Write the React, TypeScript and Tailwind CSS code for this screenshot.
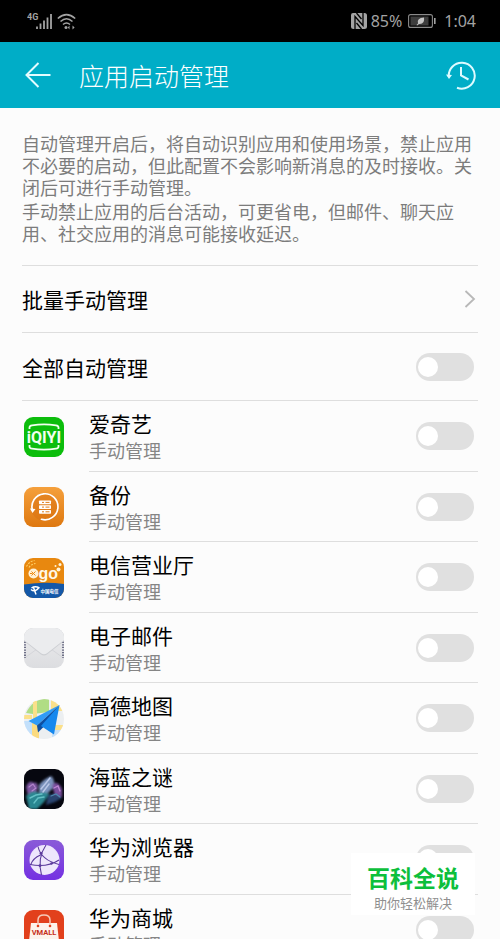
import type { ReactNode } from "react";

interface AppItem { id: string; name: string; icon: ReactNode; }

const svgProps = { viewBox: "0 0 40 40", className: "block h-10 w-10 rounded-[9px]", "aria-hidden": true };

function IqiyiIcon() {
  return (
    <svg {...svgProps}>
      <rect width="40" height="40" fill="#0cbd0c" />
      <path d="M5.500 12V10.500Q5.500 8.600 8 8.300Q20 6.600 32 8.300Q34.500 8.600 34.500 10.500V12" fill="none" stroke="#f2fff0" strokeWidth="1.800" />
      <path d="M5.500 28V29.500Q5.500 31.400 8 31.700Q20 33.400 32 31.700Q34.500 31.400 34.500 29.500V28" fill="none" stroke="#f2fff0" strokeWidth="1.800" />
      <text x="20" y="26" textAnchor="middle" fontFamily="'Liberation Sans Narrow', Roboto, sans-serif" fontWeight="700" fontSize="16" fill="#f2fff0">iQIYI</text>
    </svg>
  );
}

function BackupIcon() {
  return (
    <svg {...svgProps}>
      <defs>
        <linearGradient id="backup" x1="0" y1="0" x2="0" y2="1">
          <stop offset="0" stopColor="#f5a03c" />
          <stop offset="1" stopColor="#de7810" />
        </linearGradient>
      </defs>
      <rect width="40" height="40" fill="url(#backup)" />
      <circle cx="21" cy="20" r="14" fill="#d9720f" opacity=".5" />
      <path d="M8.500 23.500A13 13 0 1 1 17.500 32.300" fill="none" stroke="#fff" strokeWidth="1.700" strokeLinecap="round" />
      <path d="M6 21.500L8.500 26L11.500 22Z" fill="#fff" />
      {[13.5, 18.2, 22.9].map((y) => (
        <g key={y}>
          <rect x="15" y={y} width="12" height="3.800" rx=".7" fill="#fff" />
          <rect x="18" y={y + 1.4} width="2" height="1" fill="#e07f1b" />
          <rect x="21.500" y={y + 1.4} width="4" height="1" fill="#e07f1b" />
        </g>
      ))}
    </svg>
  );
}

function TelecomIcon() {
  return (
    <svg {...svgProps}>
      <rect width="40" height="40" fill="#e8880f" />
      <path d="M0 26.500Q20 23.500 40 26V40H0Z" fill="#1458a8" />
      <path d="M2.500 8.500Q5 3.500 10.500 2.500M5 9.500Q7 6 11.500 5.500" fill="none" stroke="#ffd36b" strokeWidth="1.100" strokeDasharray="2 1.200" />
      <circle cx="9.500" cy="15.500" r="5" fill="#fff1d6" />
      <path d="M7.500 13.500L11.500 17.500M11.500 13.500L7.500 17.500M6 15.500H8.500" stroke="#ee8a12" strokeWidth="1" />
      <text x="14.500" y="20.500" fontFamily="'Liberation Sans', sans-serif" fontWeight="700" fontSize="16" fill="#fff8e8">go</text>
      <circle cx="34.500" cy="11.500" r="2" fill="#fff4d8" />
      <circle cx="36" cy="6.500" r="1.500" fill="#fff4d8" />
      <circle cx="31.500" cy="8" r="1" fill="#fff4d8" />
      <path d="M7 31.500Q11 35 15 29.500M7.500 30Q11 27.500 15.500 30M9.500 29.500L12 36.500" fill="none" stroke="#fff" strokeWidth="1.500" />
      <text x="16.500" y="34.500" fontFamily="'Noto Sans CJK SC', sans-serif" fontWeight="700" fontSize="4.500" fill="#fff">中国电信</text>
    </svg>
  );
}

function MailIcon() {
  return (
    <svg {...svgProps}>
      <defs>
        <linearGradient id="mail" x1="0" y1="0" x2="0" y2="1">
          <stop offset="0" stopColor="#ececee" />
          <stop offset="1" stopColor="#dcdde0" />
        </linearGradient>
      </defs>
      <rect width="40" height="40" fill="url(#mail)" />
      <path d="M2 29L13 21M38 29L27 21" stroke="#cfd0d4" strokeWidth=".7" />
      <path d="M1 11V30M39 11V30" stroke="#6d6f86" strokeWidth="2" strokeDasharray="1.300 1.300" />
      <path d="M0 13L17 26.500Q20 28.500 23 26.500L40 13V0H0Z" fill="#cdcfd3" />
      <path d="M0 12L17 25.300Q20 27.300 23 25.300L40 12V0H0Z" fill="#ebecee" />
    </svg>
  );
}

function MapIcon() {
  return (
    <svg {...svgProps}>
      <defs><clipPath id="map"><circle cx="20" cy="20" r="20" /></clipPath></defs>
      <g clipPath="url(#map)">
        <rect width="40" height="40" fill="#eceff1" />
        <path d="M2 14Q9 0 21 0H25V13L9 15Z" fill="#b0dd84" />
        <path d="M27 0H40V12H27Z" fill="#fbe08a" />
        <path d="M9 2H13V22H9Z" fill="#fbe08a" />
        <path d="M0 22H8V40H0Z" fill="#c3e0fb" />
        <path d="M8 22H15V40H8Z" fill="#fbdb80" />
        <path d="M28 26H40V31H28Z" fill="#fbe08a" />
        <path d="M28 31H40L28 40Z" fill="#c6e0f9" />
        <path d="M0 16H8V20H0Z" fill="#fbe08a" />
      </g>
      <path d="M35.500 6L4.500 22L13 26.500Z" fill="#2f9bf7" />
      <path d="M35.500 6L13 26.500L14 33.500L19 28.500Z" fill="#0c4fa3" />
      <path d="M35.500 6L17 27L30 35.500Z" fill="#1688ee" />
    </svg>
  );
}

function OceanIcon() {
  return (
    <svg {...svgProps}>
      <defs>
        <filter id="foam" x="-20%" y="-20%" width="140%" height="140%"><feGaussianBlur stdDeviation="1.300" /></filter>
        <filter id="spray"><feGaussianBlur stdDeviation=".5" /></filter>
      </defs>
      <rect width="40" height="40" fill="#06070f" />
      <g filter="url(#foam)">
        <path d="M2 18Q5 10 10 14Q13 12 14 18L12 26L4 27Z" fill="#7d56a0" />
        <path d="M15 16Q20 10 27 7Q31 10 30 18L22 26L15 27Z" fill="#7b93bd" />
        <path d="M28 16Q33 10 38 20L38 28L31 27Z" fill="#7a4f9e" />
        <path d="M2 27Q9 20 15 24Q22 22 25 25L20 33L13 40H5Z" fill="#2c8791" />
        <path d="M24 26Q32 23 38 29L31 33L22 36Z" fill="#2b4470" />
      </g>
      <g filter="url(#spray)" fill="none" strokeLinecap="round">
        <path d="M17 20L22 14L26 9M19 23L25 15" stroke="#b9c6e6" strokeWidth="1.500" />
        <path d="M5 18L9 15L11 18M8 22L12 19" stroke="#b384cc" strokeWidth="1.200" />
        <path d="M6 29L12 26L18 25M10 34L14 29L20 28" stroke="#63bfc4" strokeWidth="1.400" />
        <path d="M30 19L34 17L36 22" stroke="#bd86d2" strokeWidth="1.300" />
        <path d="M27 27L32 25L36 28" stroke="#4d86ae" strokeWidth="1.200" />
      </g>
    </svg>
  );
}

function BrowserIcon() {
  return (
    <svg {...svgProps}>
      <defs>
        <linearGradient id="browser" x1="0" y1="0" x2="0" y2="1">
          <stop offset="0" stopColor="#8a5bd8" />
          <stop offset="1" stopColor="#7430e2" />
        </linearGradient>
      </defs>
      <rect width="40" height="40" fill="url(#browser)" />
      <circle cx="20.500" cy="20" r="15" fill="#eee6fc" />
      <path d="M14 6.500Q17 20 35 24.500M22 5Q13 18 17.500 35M6 24.500Q23 28 35 20M16.500 15Q9 18 6.500 25" fill="none" stroke="#5b3a9c" strokeWidth="1.100" />
      <circle cx="17" cy="13.500" r="1.400" fill="#5b3a9c" />
      <circle cx="16" cy="25.700" r="1.400" fill="#5b3a9c" />
      <circle cx="27.500" cy="23.500" r="1.200" fill="#5b3a9c" />
    </svg>
  );
}

function VmallIcon() {
  return (
    <svg {...svgProps}>
      <rect width="40" height="40" fill="#e2401c" />
      <path d="M7 13H33L36 40H4Z" fill="#fdf3ec" />
      <path d="M14 16V10Q14 5 20 5Q26 5 26 10V16" fill="none" stroke="#f6c9b8" strokeWidth="1.500" />
      <circle cx="14" cy="16" r="1.300" fill="#e2401c" />
      <circle cx="26" cy="16" r="1.300" fill="#e2401c" />
      <text x="20" y="25" textAnchor="middle" fontFamily="Roboto, sans-serif" fontWeight="700" fontSize="7.500" fill="#c62f1a">VMALL</text>
    </svg>
  );
}

const apps: AppItem[] = [
  { id: "iqiyi", name: "爱奇艺", icon: <IqiyiIcon /> },
  { id: "backup", name: "备份", icon: <BackupIcon /> },
  { id: "telecom", name: "电信营业厅", icon: <TelecomIcon /> },
  { id: "mail", name: "电子邮件", icon: <MailIcon /> },
  { id: "map", name: "高德地图", icon: <MapIcon /> },
  { id: "ocean", name: "海蓝之谜", icon: <OceanIcon /> },
  { id: "browser", name: "华为浏览器", icon: <BrowserIcon /> },
  { id: "vmall", name: "华为商城", icon: <VmallIcon /> },
];

function Toggle({ id }: { id: string }) {
  return (
    <input
      id={id}
      type="checkbox"
      role="switch"
      className="mr-1 flex h-7 w-[58px] shrink-0 appearance-none items-center rounded-full bg-[#e0e0e0] px-0.5 before:h-5 before:w-5 before:rounded-full before:bg-white checked:justify-end checked:bg-[#00adc7]"
    />
  );
}

function StatusBar() {
  return (
    <div className="flex h-[42px] shrink-0 items-center justify-between bg-black pl-[27px] pr-6 font-['Noto_Sans'] text-base text-[#a3a3a3]">
      <div className="flex items-center gap-1">
        <svg width="26" height="18" viewBox="0 0 26 18" aria-hidden>
          <text x="0" y="8" fontFamily="'Liberation Sans Narrow', Roboto, sans-serif" fontWeight="700" fontSize="9" fill="#a3a3a3">4G</text>
          <path d="M10 17V14.500M13.500 17V11.500M17 17V8.500M20.500 17V5.500M24 17V2" stroke="#a3a3a3" strokeWidth="1.800" />
        </svg>
        <svg width="19" height="18" viewBox="0 0 19 18" fill="none" stroke="#a3a3a3" strokeWidth="1.600" aria-hidden>
          <path d="M.8 6.500Q9.500-1.200 18.200 6.500M3.500 9.500Q9.500 4 15.500 9.500M6 12.500Q9.500 9.500 13 12.500" />
          <circle cx="9" cy="15.500" r="1.500" fill="#a3a3a3" stroke="none" />
          <path d="M12.500 13.500V17.500L10.800 15.500ZM15.500 13.500V17.500L17.600 15.500Z" fill="#a3a3a3" stroke="none" />
        </svg>
      </div>
      <div className="flex items-center gap-1">
        <svg width="16" height="16" viewBox="0 0 16 16" aria-hidden>
          <path d="M2 0H13.500Q16 0 16 2.500V14Q16 16 13.500 16H2.500Q0 16 0 13.500V2Q0 0 2 0Z" fill="#a3a3a3" />
          <path d="M4 16V3.500L12 12.500V0M5.500 0L10.500 6M5.500 10L10.500 16" fill="none" stroke="#000" strokeWidth="1.300" />
        </svg>
        <span>85%</span>
        <svg width="28" height="14" viewBox="0 0 28 14" className="ml-0.5 mr-1" aria-hidden>
          <rect x=".6" y=".6" width="23.800" height="12.800" rx="2" fill="none" stroke="#8a8a8a" strokeWidth="1.100" />
          <rect x="2.500" y="2.500" width="18" height="9" fill="#3d3d3d" />
          <path d="M26.800 4V10" stroke="#a3a3a3" strokeWidth="1.600" />
          <path d="M8.500 11L10 9.500Q8.500 4 16 3.500Q17 10.500 11 10L9.200 11.500Z" fill="#c4c4c4" />
        </svg>
        <span>1:04</span>
      </div>
    </div>
  );
}

export default function App() {
  return (
    <div className="flex h-screen flex-col overflow-hidden bg-[#fcfcfc] font-['Noto_Sans','Noto_Sans_CJK_SC',sans-serif] text-black" lang="zh-CN">
      <StatusBar />
      <header className="flex h-[66px] shrink-0 items-center bg-[#00adc7] px-6 text-white">
        <button type="button" aria-label="返回" className="mr-7">
          <svg width="27" height="26" viewBox="0 0 27 26" fill="none" stroke="#e4fcff" strokeWidth="2" className="block" aria-hidden>
            <path d="M26.500 13H3M14.500 1L2.500 13L14.500 25" />
          </svg>
        </button>
        <h1 className="flex-1 pt-0.5 text-[25px] font-light leading-8">应用启动管理</h1>
        <button type="button" aria-label="历史记录">
          <svg width="30" height="30" viewBox="0 0 30 30" fill="none" stroke="#dffbff" strokeWidth="2" className="block" aria-hidden>
            <path d="M2.800 17A13 13 0 1 1 11 27.800" />
            <path d="M15 7V15.500L22.500 19.500" />
            <path d="M0 14.500L3 19L6 15Z" fill="#dffbff" stroke="none" />
          </svg>
        </button>
      </header>
      <main className="px-[22px]">
        <section className="border-b border-[#dedede] pb-5 pt-[25px] text-lg leading-[22px] text-[#7c7c7c]">
          <p>自动管理开启后，将自动识别应用和使用场景，禁止应用不必要的启动，但此配置不会影响新消息的及时接收。关闭后可进行手动管理。</p>
          <p className="mt-0.5">手动禁止应用的后台活动，可更省电，但邮件、聊天应用、社交应用的消息可能接收延迟。</p>
        </section>
        <button type="button" className="flex h-[67px] w-full items-center justify-between border-b border-[#dedede] text-left text-[21px]">
          <span className="pt-1">批量手动管理</span>
          <svg width="12" height="18" viewBox="0 0 12 18" fill="none" stroke="#b8b8b8" strokeWidth="1.800" className="mr-0.5" aria-hidden>
            <path d="M1.500 1L10 9L1.500 17" />
          </svg>
        </button>
        <div className="flex h-[68px] items-center justify-between border-b border-[#dedede] text-[21px]">
          <label htmlFor="all" className="pt-1">全部自动管理</label>
          <Toggle id="all" />
        </div>
        <ul>
          {apps.map((a) => (
            <li key={a.id} className="flex h-[70px] items-stretch pl-0.5 odd:h-[71px]">
              <div className="flex w-[65px] shrink-0 items-center">{a.icon}</div>
              <div className="flex flex-1 items-center justify-between border-b border-[#dedede]">
                <label htmlFor={a.id} className="flex flex-col pt-1 leading-[27px]">
                  <span className="text-[21px]">{a.name}</span>
                  <span className="text-lg leading-[27px] text-[#858585]">手动管理</span>
                </label>
                <Toggle id={a.id} />
              </div>
            </li>
          ))}
        </ul>
      </main>
      <aside className="fixed bottom-6 right-[25px] flex flex-col items-center bg-white px-4 pb-1 pt-2">
        <strong className="text-[23px] font-bold leading-[34px] text-[#0dbf3c]">百科全说</strong>
        <span className="text-[13px] leading-4 text-[#8f8f8f]">助你轻松解决</span>
      </aside>
    </div>
  );
}
